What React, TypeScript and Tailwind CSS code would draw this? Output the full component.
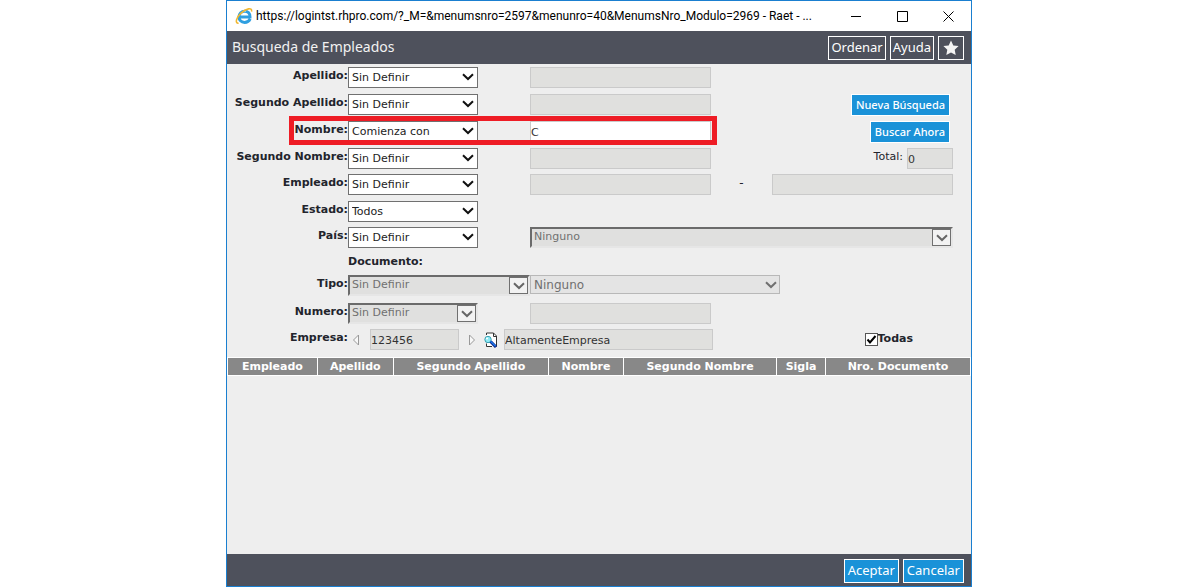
import type { ReactNode } from "react";

const OPERATORS = ["Sin Definir", "Comienza con", "Contiene", "Igual a"];

const COLUMNS = [
  { title: "Empleado", width: "w-[12.1%]" },
  { title: "Apellido", width: "w-[10.2%]" },
  { title: "Segundo Apellido", width: "w-[20.9%]" },
  { title: "Nombre", width: "w-[10.1%]" },
  { title: "Segundo Nombre", width: "w-[20.6%]" },
  { title: "Sigla", width: "w-[6.6%]" },
  { title: "Nro. Documento", width: "w-[19.5%]" },
];

function Chevron({ className }: { className: string }) {
  return (
    <svg viewBox="0 0 12 8" className={`pointer-events-none absolute h-2 w-3 ${className}`} fill="none" stroke="currentColor" strokeWidth="2">
      <path d="M1 1.2 L6 6 L11 1.2" />
    </svg>
  );
}

interface PickerProps {
  id: string;
  value: string;
  options?: string[];
  label?: string;
}

function Picker({ id, value, options = OPERATORS, label }: PickerProps) {
  return (
    <div className="relative w-[130px]">
      <select id={id} aria-label={label} defaultValue={value} className="block h-[21px] w-full appearance-none border border-[#707070] bg-white pt-0.5 pl-[3px] text-[11px] text-[#222]">
        {options.map((option) => (
          <option key={option}>{option}</option>
        ))}
      </select>
      <Chevron className="top-1.5 right-1 text-[#111]" />
    </div>
  );
}

function DisabledPicker({ id, value, label, className }: { id: string; value: string; label?: string; className: string }) {
  return (
    <div className={`relative ${className}`}>
      <select id={id} aria-label={label} disabled className="block h-[21px] w-full appearance-none border-2 border-t-[#6b6b6b] border-r-[#e6e6e6] border-b-[#e6e6e6] border-l-[#6b6b6b] bg-[#e0e0df] pl-[2px] text-[11px] text-[#707070] opacity-100">
        <option>{value}</option>
      </select>
      <span className="pointer-events-none absolute top-0.5 right-0.5 block h-[17px] w-[19px] border border-[#707070] bg-[#f2f2f2]">
        <Chevron className="top-1 left-[3px] text-[#666]" />
      </span>
    </div>
  );
}

function TextBox({ label, value, enabled, className }: { label: string; value?: string; enabled?: boolean; className: string }) {
  return (
    <input
      type="text"
      aria-label={label}
      defaultValue={value}
      readOnly={!enabled}
      className={`block h-[21px] border border-[#cacaca] pt-px text-[11px] text-[#333] outline-none ${enabled ? "bg-white" : "bg-[#e0e0de]"} ${className}`}
    />
  );
}

interface RowProps {
  label: string;
  htmlFor: string;
  height: string;
  control: ReactNode;
  children?: ReactNode;
}

function Row({ label, htmlFor, height, control, children }: RowProps) {
  return (
    <div className={`relative flex items-start ${height}`}>
      <label htmlFor={htmlFor} className="w-[121px] shrink-0 text-right text-[11px] leading-[18px] font-bold whitespace-nowrap">
        {label}:
      </label>
      <div className="w-[182px] shrink-0">{control}</div>
      <div className="flex min-w-0 flex-1 items-start">{children}</div>
    </div>
  );
}

function SearchButton({ children }: { children: ReactNode }) {
  return (
    <button type="button" className="mr-[3px] ml-auto h-[22px] border border-white bg-[#1a92d8] px-1 font-['Noto_Sans'] text-[11px] leading-5 font-medium whitespace-nowrap text-white">
      {children}
    </button>
  );
}

function BarButton({ children, primary, label }: { children: ReactNode; primary?: boolean; label?: string }) {
  return (
    <button type="button" aria-label={label} className={`flex h-6 items-center border border-white text-[13px] text-white ${primary ? "bg-[#1a92d8] px-[3px]" : "px-0.5"}`}>
      {children}
    </button>
  );
}

function ExplorerIcon() {
  return (
    <svg viewBox="0 0 18 18" className="h-[18px] w-[18px] shrink-0" fill="none">
      <path d="M15.2 11.8 C14 14.4 12 15.4 9.6 15.4 C6.2 15.4 4 13 4 9.8 C4 6.4 6.6 4.2 9.7 4.2 C13 4.2 15.2 6.6 15 10 H5.5" stroke="#2f9fe0" strokeWidth="3" />
      <path d="M6 7.2 C7 5 9 4 11 4.4" stroke="#8ed4f7" strokeWidth="1" />
      <path d="M3.6 16.2 C-0.4 16.6 1.2 10.6 6 6.2 C11 1.6 17.4 -0.2 16.6 4.6" stroke="#f0b730" strokeWidth="1.6" />
    </svg>
  );
}

function LookupIcon() {
  return (
    <svg viewBox="0 0 16 16" className="h-4 w-4" fill="none">
      <path d="M3.5 1 H10.5 L14 4.5 V14.5 H3.5 Z" fill="#fff" />
      <path d="M3.5 3 V1 H10.5 L13.5 4 V14.5 H12 M3.5 11.5 V14.5 H9" stroke="#333" />
      <path d="M10.5 1 V4.5 H14" stroke="#333" />
      <circle cx="5" cy="7.5" r="3.2" fill="#8eeaf5" stroke="#3a9fb0" />
      <circle cx="4" cy="6.5" r="1" fill="#fff" />
      <path d="M7.5 9.5 L13 15" stroke="#0a1f80" strokeWidth="3" />
      <path d="M7.5 9.2 L12.6 14.2" stroke="#1c7cf0" strokeWidth="1.4" />
    </svg>
  );
}

export default function App() {
  return (
    <div className="min-h-screen bg-white pr-[3px] font-['DejaVu_Sans',sans-serif] text-[#22242c]">
      <div className="mx-auto flex min-h-screen w-full max-w-[746px] flex-col border border-[#1a7fd0] bg-[#eeeeee]">
        <div className="flex h-[30px] items-center bg-white pl-2 font-['Roboto',sans-serif] text-[12px] text-black">
          <ExplorerIcon />
          <span className="ml-[3px] whitespace-nowrap">https://logintst.rhpro.com/?_M=&amp;menumsnro=2597&amp;menunro=40&amp;MenumsNro_Modulo=2969 - Raet - ...</span>
          <div className="ml-auto flex shrink-0">
            <button type="button" aria-label="Minimizar" className="flex h-7 w-[46px] items-center justify-center">
              <svg viewBox="0 0 11 11" className="h-[11px] w-[11px]" stroke="currentColor"><path d="M0 5.5 H10" /></svg>
            </button>
            <button type="button" aria-label="Maximizar" className="flex h-7 w-[46px] items-center justify-center">
              <svg viewBox="0 0 11 11" className="h-[11px] w-[11px]" fill="none" stroke="currentColor"><path d="M0.5 0.5 H10.5 V10.5 H0.5 Z" /></svg>
            </button>
            <button type="button" aria-label="Cerrar" className="flex h-7 w-[46px] items-center justify-center">
              <svg viewBox="0 0 11 11" className="h-[11px] w-[11px]" stroke="currentColor"><path d="M0.5 0.5 L10.5 10.5 M10.5 0.5 L0.5 10.5" /></svg>
            </button>
          </div>
        </div>

        <header className="flex h-[33px] items-center bg-[#4e515c] pr-[7px] pl-[5px] font-['Noto_Sans',sans-serif]">
          <h1 className="pb-0.5 text-[14px] text-[#f2f2f2]">Busqueda de Empleados</h1>
          <div className="ml-auto flex gap-1">
            <BarButton>Ordenar</BarButton>
            <BarButton>Ayuda</BarButton>
            <BarButton label="Favorito">
              <svg viewBox="0 0 18 18" className="h-[18px] w-5" fill="#f4f4f4">
                <path d="M9 1.5 L11.3 6.4 L16.6 7 L12.7 10.7 L13.7 16 L9 13.4 L4.3 16 L5.3 10.7 L1.4 7 L6.7 6.4 Z" />
              </svg>
            </BarButton>
          </div>
        </header>

        <form className="flex flex-col pt-[3px] pr-[18px]">
          <Row label="Apellido" htmlFor="apellido" height="h-[27px]" control={<Picker id="apellido" value="Sin Definir" />}>
            <TextBox label="Apellido" className="w-[181px]" />
          </Row>
          <Row label="Segundo Apellido" htmlFor="apellido2" height="h-[27px]" control={<Picker id="apellido2" value="Sin Definir" />}>
            <TextBox label="Segundo Apellido" className="w-[181px]" />
            <SearchButton>Nueva Búsqueda</SearchButton>
          </Row>
          <Row label="Nombre" htmlFor="nombre" height="h-[27px]" control={<Picker id="nombre" value="Comienza con" />}>
            <TextBox label="Nombre" value="C" enabled className="w-[181px]" />
            <SearchButton>Buscar Ahora</SearchButton>
            <div className="pointer-events-none absolute -top-[5px] left-[62px] h-[29px] w-[428px] border-5 border-[#ee1c25]" />
          </Row>
          <Row label="Segundo Nombre" htmlFor="nombre2" height="h-[26px]" control={<Picker id="nombre2" value="Sin Definir" />}>
            <TextBox label="Segundo Nombre" className="w-[181px]" />
            <label htmlFor="total" className="mr-1 ml-auto text-[11px] leading-[18px]">Total:</label>
            <input id="total" readOnly defaultValue="0" className="block h-[21px] w-[46px] border border-[#cacaca] bg-[#e0e0de] pt-px text-[11px] text-[#333] outline-none" />
          </Row>
          <Row label="Empleado" htmlFor="empleado" height="h-[27px]" control={<Picker id="empleado" value="Sin Definir" />}>
            <TextBox label="Empleado desde" className="w-[181px]" />
            <span className="flex-1 text-center text-[12px] leading-[18px]">-</span>
            <TextBox label="Empleado hasta" className="w-[181px]" />
          </Row>
          <Row label="Estado" htmlFor="estado" height="h-[26px]" control={<Picker id="estado" value="Todos" options={["Todos", "Activo", "Inactivo"]} />} />
          <Row label="País" htmlFor="pais" height="h-[26px]" control={<Picker id="pais" value="Sin Definir" />}>
            <DisabledPicker id="pais-valor" label="País" value="Ninguno" className="w-full" />
          </Row>
          <p className="h-[22px] pl-[121px] text-[11px] leading-[18px] font-bold">Documento:</p>
          <Row label="Tipo" htmlFor="tipo" height="h-7" control={<DisabledPicker id="tipo" value="Sin Definir" className="w-[182px]" />}>
            <div className="relative w-[250px]">
              <select aria-label="Tipo de documento" disabled className="block h-[19px] w-full appearance-none border border-[#b8b8b8] bg-[#e4e4e4] pl-[3px] text-[12px] text-[#707070] opacity-100">
                <option>Ninguno</option>
              </select>
              <Chevron className="top-1.5 right-[3px] text-[#707070]" />
            </div>
          </Row>
          <Row label="Numero" htmlFor="numero" height="h-[26px]" control={<DisabledPicker id="numero" value="Sin Definir" className="w-[130px]" />}>
            <TextBox label="Numero" className="w-[181px]" />
          </Row>
          <div className="flex h-7 items-start">
            <label htmlFor="empresa" className="w-[121px] shrink-0 text-right text-[11px] leading-[18px] font-bold">Empresa:</label>
            <button type="button" aria-label="Anterior" className="flex h-[21px] w-[22px] items-center pl-1">
              <svg viewBox="0 0 8 12" className="h-3 w-2" fill="#f8f8f8" stroke="#999"><path d="M6.5 1 V11 L1.5 6 Z" /></svg>
            </button>
            <input id="empresa" readOnly defaultValue="123456" className="block h-[21px] w-[89px] border border-[#cacaca] bg-[#e0e0de] pt-px text-[11px] text-[#333] outline-none" />
            <button type="button" aria-label="Siguiente" className="flex h-[21px] w-6 items-center pl-[9px]">
              <svg viewBox="0 0 8 12" className="h-3 w-2" fill="#f8f8f8" stroke="#999"><path d="M1.5 1 V11 L6.5 6 Z" /></svg>
            </button>
            <button type="button" aria-label="Buscar empresa" className="flex h-[21px] w-[21px] items-center">
              <LookupIcon />
            </button>
            <TextBox label="Nombre de la empresa" value="AltamenteEmpresa" className="w-[209px]" />
            <label className="mr-10 ml-auto flex h-[21px] items-center text-[11px] font-bold">
              <span className="relative block h-[13px] w-[13px] shrink-0">
                <input type="checkbox" defaultChecked className="peer block h-[13px] w-[13px] appearance-none border border-[#555] bg-white" />
                <svg viewBox="0 0 13 13" className="pointer-events-none absolute inset-0 hidden h-[13px] w-[13px] peer-checked:block" fill="none" stroke="#000" strokeWidth="2"><path d="M2.5 6.5 L5 9.5 L10.5 3" /></svg>
              </span>
              Todas
            </label>
          </div>
        </form>

        <table className="w-full table-fixed border-collapse border-y border-white bg-[#888888] text-[11px] leading-[17px] text-white">
          <thead>
            <tr>
              {COLUMNS.map((column) => (
                <th key={column.title} className={`border-x border-white p-0 font-bold whitespace-nowrap ${column.width}`}>
                  {column.title}
                </th>
              ))}
            </tr>
          </thead>
        </table>

        <footer className="mt-auto flex h-8 items-center justify-end gap-1 bg-[#4e515c] pt-px pr-[7px] font-['Noto_Sans',sans-serif]">
          <BarButton primary>Aceptar</BarButton>
          <BarButton primary>Cancelar</BarButton>
        </footer>
      </div>
    </div>
  );
}
